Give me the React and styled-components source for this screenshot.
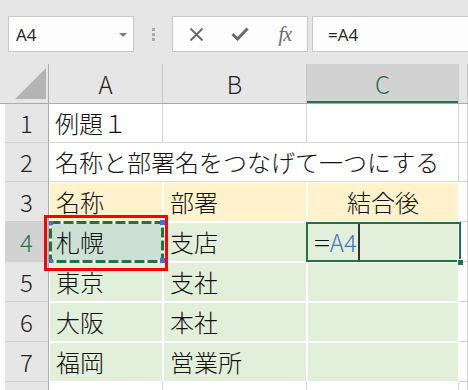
import React from 'react'
import styled, { createGlobalStyle } from 'styled-components';

const GlobalStyle = createGlobalStyle`
    html, body {
        margin: 0;
        padding: 0;
        background: #ffffff;
    }
    body {
        font-family: "Noto Sans CJK JP", "Noto Sans", sans-serif;
        overflow: hidden;
    }
`;

const COLS = '44px 114px 144px 152px 1fr';
const GREEN = '#217346';

export default function App() {
    return (
        <Page>
            <GlobalStyle />
            <Toolbar>
                <NameBox>
                    <span>A4</span>
                    <Caret />
                </NameBox>
                <Grip>
                    <i /><i /><i />
                </Grip>
                <FuncBox>
                    <IconSlot>
                        <svg width="15" height="13" viewBox="0 0 15 13">
                            <path d="M1.5 0.5 L13.5 12.5 M13.5 0.5 L1.5 12.5" stroke="#6a6a6a" strokeWidth="2" fill="none" />
                        </svg>
                    </IconSlot>
                    <IconSlot>
                        <svg width="18" height="14" viewBox="0 0 18 14">
                            <path d="M1.5 7 L6.5 12 L16.5 1.5" stroke="#6a6a6a" strokeWidth="3" fill="none" />
                        </svg>
                    </IconSlot>
                    <IconSlot>
                        <Fx>fx</Fx>
                    </IconSlot>
                </FuncBox>
                <FormulaBox>=A4</FormulaBox>
            </Toolbar>

            <HeaderRow>
                <Corner>
                    <svg width="31" height="31" viewBox="0 0 31 31">
                        <polygon points="0,31 31,31 31,0" fill="#b4b4b4" />
                    </svg>
                </Corner>
                <ColHead>A</ColHead>
                <ColHead>B</ColHead>
                <ColHead $active>C</ColHead>
                <ColHead />
            </HeaderRow>

            <Row $h={39}>
                <RowHead>1</RowHead>
                <Cell>例題１</Cell>
                <Cell />
                <Cell />
                <Cell />
            </Row>
            <Row $h={39}>
                <RowHead>2</RowHead>
                <Cell $span={3}>名称と部署名をつなげて一つにする</Cell>
                <Cell />
            </Row>
            <Row $h={40}>
                <RowHead>3</RowHead>
                <Cell $fill="#fff2cc">名称</Cell>
                <Cell $fill="#fff2cc">部署</Cell>
                <Cell $fill="#fff2cc" $center>結合後</Cell>
                <Cell />
            </Row>
            <Row $h={40}>
                <RowHead $active>4</RowHead>
                <Cell $fill="#cde0d4" $raise>
                    札幌
                    <Marquee width="116" height="43" viewBox="0 0 116 43">
                        <rect x="1.5" y="2.5" width="112" height="39" fill="none" stroke="#ffffff" strokeWidth="3" />
                        <rect x="1.5" y="2.5" width="112" height="39" fill="none" stroke={GREEN} strokeWidth="3" strokeDasharray="10 3" />
                        <rect x="0" y="1" width="4" height="4" fill="#4472c4" />
                        <rect x="111" y="0" width="5" height="5" fill="#4472c4" />
                        <rect x="0" y="39" width="4" height="4" fill="#4472c4" />
                        <rect x="111" y="38" width="5" height="5" fill="#4472c4" />
                    </Marquee>
                    <Annotation />
                </Cell>
                <Cell $fill="#e2efda">支店</Cell>
                <Cell $fill="#e2efda" $raise>
                    <Equals>=</Equals>
                    <Ref>A4</Ref>
                    <TextCursor />
                    <ActiveBorder />
                    <FillHandle />
                </Cell>
                <Cell />
            </Row>
            <Row $h={40}>
                <RowHead>5</RowHead>
                <Cell $fill="#e2efda">東京</Cell>
                <Cell $fill="#e2efda">支社</Cell>
                <Cell $fill="#e2efda" />
                <Cell />
            </Row>
            <Row $h={40}>
                <RowHead>6</RowHead>
                <Cell $fill="#e2efda">大阪</Cell>
                <Cell $fill="#e2efda">本社</Cell>
                <Cell $fill="#e2efda" />
                <Cell />
            </Row>
            <Row $h={40}>
                <RowHead>7</RowHead>
                <Cell $fill="#e2efda">福岡</Cell>
                <Cell $fill="#e2efda">営業所</Cell>
                <Cell $fill="#e2efda" />
                <Cell />
            </Row>
            <Row $h={40}>
                <RowHead />
                <Cell />
                <Cell />
                <Cell />
                <Cell />
            </Row>
        </Page>
    )
}

const Page = styled.div`
    width: 468px;
    height: 390px;
    overflow: hidden;
    background: #ffffff;
`;

const Toolbar = styled.div`
    height: 64px;
    box-sizing: border-box;
    padding: 16px 0 0 8px;
    background: #e6e6e6;
    display: flex;
    align-items: flex-start;
`;

const Box = styled.div`
    height: 36px;
    box-sizing: border-box;
    border: 1px solid #c6c6c6;
    background: #fdfdfd;
    display: flex;
    align-items: center;
`;

const NameBox = styled(Box)`
    width: 126px;
    padding: 0 6px 0 7px;
    justify-content: space-between;
    font-family: "Open Sans", "Noto Sans", sans-serif;
    font-size: 17px;
    color: #222;
`;

const Caret = styled.span`
    width: 0;
    height: 0;
    border-left: 4px solid transparent;
    border-right: 4px solid transparent;
    border-top: 4px solid #7a7a7a;
    margin-top: 1px;
`;

const Grip = styled.div`
    width: 38px;
    height: 36px;
    display: flex;
    flex-direction: column;
    align-items: center;
    justify-content: center;
    gap: 2px;
    i {
        display: block;
        width: 3px;
        height: 3px;
        background: #a8a8a8;
    }
`;

const FuncBox = styled(Box)`
    width: 136px;
    padding-left: 1px;
`;

const IconSlot = styled.div`
    width: 45px;
    height: 34px;
    display: flex;
    align-items: center;
    justify-content: center;
`;

const Fx = styled.span`
    font-family: "Liberation Serif", "DejaVu Serif", serif;
    font-style: italic;
    font-size: 20px;
    color: #6a6a6a;
    letter-spacing: -1px;
`;

const FormulaBox = styled(Box)`
    flex: 1;
    margin-left: 4px;
    padding-left: 15px;
    border-right: none;
    font-family: "Open Sans", "Noto Sans", sans-serif;
    font-size: 17px;
    color: #222;
`;

const HeaderRow = styled.div`
    display: grid;
    grid-template-columns: ${COLS};
    padding-left: 5px;
    height: 40px;
    box-sizing: border-box;
    background: #e6e6e6;
    border-bottom: 1px solid #ababab;
`;

const Corner = styled.div`
    display: flex;
    align-items: flex-end;
    justify-content: flex-end;
    padding: 0 2px 4px 0;
    border-right: 1px solid #ababab;
`;

const ColHead = styled.div`
    display: flex;
    align-items: center;
    justify-content: center;
    border-right: 1px solid #c8c8c8;
    font-size: 24px;
    font-weight: 300;
    line-height: 1;
    color: ${p => (p.$active ? GREEN : '#222')};
    background: ${p => (p.$active ? '#d2d2d2' : 'transparent')};
    box-shadow: ${p => (p.$active ? `inset 0 -2px 0 ${GREEN}` : 'none')};
`;

const Row = styled.div`
    display: grid;
    grid-template-columns: ${COLS};
    padding-left: 5px;
    height: ${p => p.$h}px;
`;

const RowHead = styled.div`
    display: flex;
    align-items: center;
    justify-content: center;
    background: ${p => (p.$active ? '#d2d2d2' : '#e6e6e6')};
    color: ${p => (p.$active ? GREEN : '#222')};
    border-right: 1px solid #ababab;
    border-bottom: 1px solid #cfcfcf;
    font-size: 24px;
    font-weight: 300;
    line-height: 1;
`;

const Cell = styled.div`
    position: relative;
    box-sizing: border-box;
    display: flex;
    align-items: center;
    justify-content: ${p => (p.$center ? 'center' : 'flex-start')};
    padding-left: ${p => (p.$center ? 0 : 6)}px;
    grid-column: span ${p => p.$span || 1};
    white-space: nowrap;
    font-size: 24px;
    font-weight: 300;
    line-height: 1;
    color: #111;
    z-index: ${p => (p.$raise ? 2 : 'auto')};
    background: ${p => p.$fill || 'transparent'};
    border-right: 1px solid ${p => (p.$fill ? '#ffffff' : '#d4d4d4')};
    border-bottom: 1px solid ${p => (p.$fill ? '#ffffff' : '#d4d4d4')};
    border-top: ${p => (p.$fill ? '1px solid #ffffff' : 'none')};
    border-left: ${p => (p.$fill ? '1px solid #ffffff' : 'none')};
`;

const Marquee = styled.svg`
    position: absolute;
    left: -1px;
    top: -3px;
`;

const Annotation = styled.div`
    position: absolute;
    left: -6px;
    top: -8px;
    width: 124px;
    height: 56px;
    box-sizing: border-box;
    border: 3px solid #ff0000;
`;

const Equals = styled.span`
    display: inline-block;
    transform: scaleX(1.25);
    transform-origin: left center;
    margin-right: 3px;
`;

const Ref = styled.span`
    color: #4472c4;
`;

const TextCursor = styled.span`
    align-self: stretch;
    width: 2px;
    margin-left: 1px;
    background: #333;
`;

const ActiveBorder = styled.div`
    position: absolute;
    left: -2px;
    top: -1px;
    right: -3px;
    bottom: -1px;
    border: 2px solid ${GREEN};
    pointer-events: none;
`;

const FillHandle = styled.div`
    position: absolute;
    right: -5px;
    bottom: -4px;
    width: 5px;
    height: 5px;
    background: ${GREEN};
    border-left: 1px solid #fff;
    border-top: 1px solid #fff;
`;
